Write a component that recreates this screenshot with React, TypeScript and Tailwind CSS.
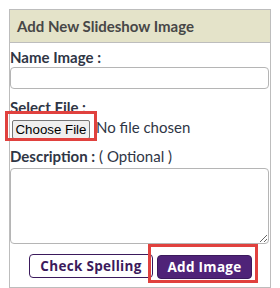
import React from 'react';

export default function App() {
  return (
    <div className="w-[280px] h-[288px] bg-white pt-[9px] pl-[9px] overflow-hidden" style={{ fontFamily: 'Lato, "Open Sans", sans-serif' }}>
      <div className="w-[262px] h-[279px] border border-[#bdbdbd] flex flex-col">
        {/* header */}
        <div className="h-[33px] bg-[#e4e3c9] border-b border-[#bdbdbd] flex items-center pl-[7px] text-[15px] font-bold text-[#474747]">
          Add New Slideshow Image
        </div>

        <div className="flex flex-col">
          <label className="mt-[5px] h-[18px] leading-[18px] text-[15px] font-bold text-[#2f3645]">Name Image :</label>
          <input type="text" className="mt-[1px] h-[22px] w-[259px] border border-[#b5b5b5] rounded-[4px] bg-white" />

          <label className="mt-[9px] h-[18px] leading-[18px] text-[15px] font-bold text-[#2f3645]">Select File :</label>
          <div className="mt-[2px] flex items-center h-[19px]">
            <div className="relative ml-[2px]">
              <button
                className="h-[19px] w-[78px] bg-[#efefef] border border-[#767676] rounded-[2px] text-[13.3px] text-black leading-none"
                style={{ fontFamily: '"Liberation Sans", Arial, sans-serif' }}
              >
                Choose File
              </button>
              <div className="absolute left-[-7px] top-[-5px] w-[92px] h-[30px] border-[3px] border-[#e0413e] pointer-events-none" />
            </div>
            <span className="ml-[6px] text-[15px] text-[#2f3645]">No file chosen</span>
          </div>

          <div className="mt-[10px] h-[18px] leading-[18px] text-[15px] text-[#2f3645]">
            <span className="font-bold">Description :</span> ( Optional )
          </div>
          <textarea className="mt-[3px] h-[76px] w-[259px] border border-[#b5b5b5] rounded-[4px] bg-white resize" />

          <div className="mt-[10px] flex justify-center gap-[4px] pl-[1px]">
            <button
              className="h-[24px] w-[124px] border border-[#3b1a5c] rounded-[4px] bg-white text-[13.5px] font-bold text-[#3b1a5c] tracking-[0.3px]"
              style={{ fontFamily: '"Open Sans", Lato, sans-serif' }}
            >
              Check Spelling
            </button>
            <div className="relative">
              <button
                className="h-[24px] w-[95px] rounded-[4px] bg-[#4f2378] border border-[#3b1a5c] text-[13.5px] font-bold text-white tracking-[0.3px]"
                style={{ fontFamily: '"Open Sans", Lato, sans-serif' }}
              >
                Add Image
              </button>
              <div className="absolute left-[-9px] top-[-10px] w-[110px] h-[39px] border-[3px] border-[#e0413e] pointer-events-none" />
            </div>
          </div>
        </div>
      </div>
    </div>
  );
}
